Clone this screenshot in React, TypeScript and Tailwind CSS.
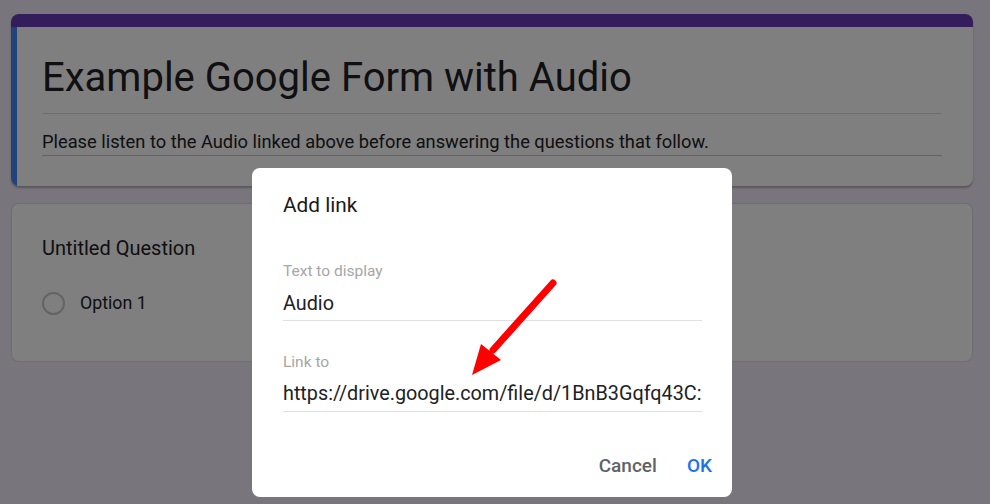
import React from 'react';

const font = { fontFamily: 'Roboto, "Noto Sans", Arial, sans-serif' };

function Arrow() {
  return (
    <svg className="absolute left-0 top-0 pointer-events-none" width="990" height="504" viewBox="0 0 990 504">
      <line x1="553" y1="283" x2="493" y2="350" stroke="#ff0000" strokeWidth="7" strokeLinecap="round" />
      <polygon points="472,375 481,344 501,360" fill="#ff0000" />
    </svg>
  );
}

export default function App() {
  return (
    <div className="relative w-[990px] h-[504px] overflow-hidden bg-[#f0ebf8]" style={font}>
      <div className="flex flex-col gap-[17px] pl-[11px] pr-[17px] pt-[14px]">
        {/* header card */}
        <div className="rounded-lg bg-white overflow-hidden shadow-[0_2px_2px_rgba(0,0,0,0.25)]">
          <div className="h-[13px] bg-[#673ab7]" />
          <div className="border-l-[6px] border-[#4285f4] pl-[25px] pr-[31px] pt-[27px] pb-[30px]">
            <div className="border-b border-[#dadada] pb-[11px]">
              <h1 className="text-[40px] leading-[48px] text-[#202124]">Example Google Form with Audio</h1>
            </div>
            <div className="border-b border-[#c6c6c6] pt-[16px] pb-[1px]">
              <p className="text-[18.3px] leading-[24px] text-[#202124]">
                Please listen to the Audio linked above before answering the questions that follow.
              </p>
            </div>
          </div>
        </div>

        {/* question card */}
        <div className="h-[159px] rounded-lg bg-white border border-[#dadce0] px-[30px] pt-[31px]">
          <p className="text-[20px] leading-[26px] text-[#202124]">Untitled Question</p>
          <div className="flex items-center gap-[15px] mt-[30px]">
            <span className="w-[23px] h-[23px] rounded-full border-2 border-[#c8c8c8]" />
            <span className="text-[17.8px] leading-[24px] text-[#202124]">Option 1</span>
          </div>
        </div>
      </div>

      {/* scrim */}
      <div className="absolute inset-0 bg-black/50" />

      {/* dialog */}
      <div className="absolute left-[252px] top-[168px] w-[480px] h-[329px] rounded-lg bg-white pl-[31px] pr-[30px] pt-[25px] flex flex-col">
        <h2 className="text-[20.8px] leading-[24px] text-[#1a1a1a]">Add link</h2>

        <label className="mt-[44px] text-[15.5px] leading-[20px] text-[#a6a6a6]">Text to display</label>
        <div className="mt-[11px] pb-[4px] border-b border-[#e0e0e0]">
          <p className="text-[19.8px] leading-[24px] text-[#202124]">Audio</p>
        </div>

        <label className="mt-[31px] text-[15.5px] leading-[20px] text-[#a6a6a6]">Link to</label>
        <div className="mt-[10px] pb-[5px] border-b border-[#e0e0e0] overflow-hidden">
          <p className="text-[19.8px] leading-[24px] text-[#202124] whitespace-nowrap">
            https://drive.google.com/file/d/1BnB3Gqfq43C:
          </p>
        </div>

        <div className="mt-[42px] flex justify-end items-center gap-[30px] mr-[-10px]">
          <button className="text-[19px] leading-[24px] font-medium text-[#5f6368]">Cancel</button>
          <button className="text-[19px] leading-[24px] font-medium text-[#1a73e8]">OK</button>
        </div>
      </div>

      <Arrow />
    </div>
  );
}
